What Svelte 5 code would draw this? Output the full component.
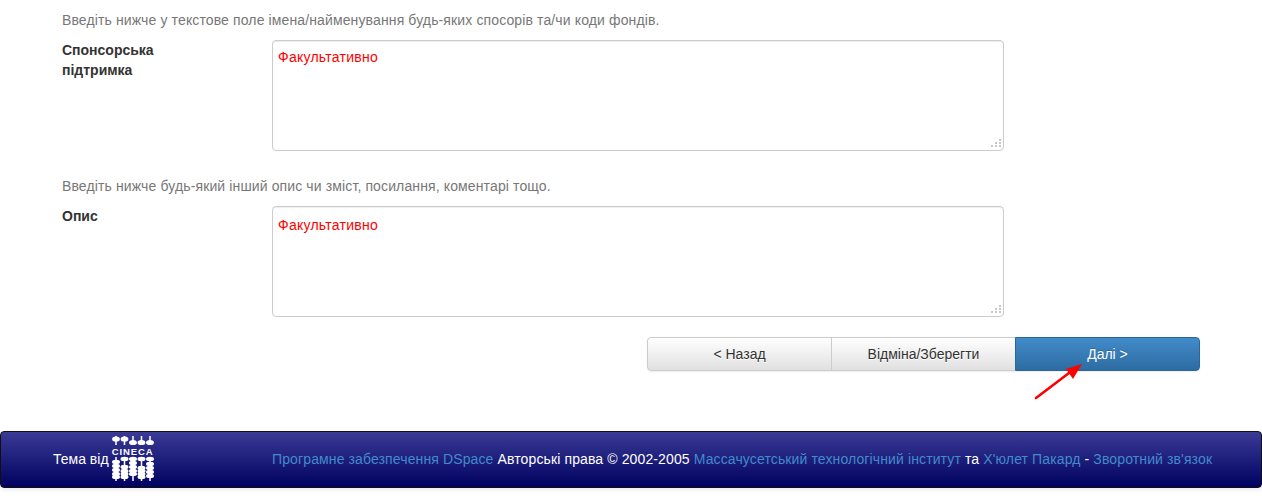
<script lang="ts">
  const fields = [
    {
      hint: 'Введіть нижче у текстове поле імена/найменування будь-яких спосорів та/чи коди фондів.',
      label: 'Спонсорська підтримка',
      name: 'sponsors',
      low: false
    },
    {
      hint: 'Введіть нижче будь-який інший опис чи зміст, посилання, коментарі тощо.',
      label: 'Опис',
      name: 'description',
      low: true
    }
  ];

  // CINECA abacus logo: five rods, beads listed by y
  const rods = [
    { x: 4, top: 3, stem: [0, 9], low: [26, 30, 34, 38, 41] },
    { x: 12.5, top: 3, stem: [0, 9], low: [23, 31, 35, 38, 41] },
    { x: 21, top: 6.5, stem: [0, 7], low: [23, 27, 31, 35, 38] },
    { x: 29.5, top: 6.5, stem: [0, 7], low: [23, 32, 35, 38, 41] },
    { x: 38, top: 6.5, stem: [0, 7], low: [23, 28, 32, 36, 40] }
  ];
</script>

<div class="page">
  <main class="container">
    {#each fields as f (f.name)}
      <p class="hint">{f.hint}</p>
      <div class="field">
        <label class="field-label" for={f.name}>{f.label}</label>
        <div class="input-wrap">
          <textarea id={f.name} class="field-input" class:low={f.low} rows="5" value="Факультативно"></textarea>
          <svg class="grip" width="11" height="9" viewBox="0 0 11 9" aria-hidden="true">
            <g fill="#c8c8c8">
              <rect x="8" y="0" width="2" height="2" />
              <rect x="4" y="3" width="2" height="2" />
              <rect x="8" y="3" width="2" height="2" />
              <rect x="0" y="6" width="2" height="2" />
              <rect x="4" y="6" width="2" height="2" />
              <rect x="8" y="6" width="2" height="2" />
            </g>
          </svg>
        </div>
      </div>
    {/each}

    <div class="actions">
      <button class="btn">&lt; Назад</button>
      <button class="btn">Відміна/Зберегти</button>
      <button class="btn btn-primary">Далі &gt;</button>
    </div>
  </main>

  <svg class="arrow" width="56" height="44" viewBox="0 0 56 44" aria-hidden="true">
    <path d="M3 40 L36 15" stroke="#f00" stroke-width="2.6" stroke-linecap="round" />
    <path d="M49 6 L33 11 L40 21 Z" fill="#f00" />
  </svg>

  <footer class="footer">
    <div class="theme">
      <span>Тема від</span>
      <div class="logo">
        <svg width="42" height="46" viewBox="0 0 42 46" aria-hidden="true">
          <g fill="#fff" stroke="#fff">
            {#each rods as r (r.x)}
              <line x1={r.x} y1={r.stem[0]} x2={r.x} y2={r.stem[1]} stroke-width="1.5" />
              <ellipse cx={r.x} cy={r.top} rx="3.9" ry="2.6" stroke="none" />
              <line x1={r.x} y1="21" x2={r.x} y2="45" stroke-width="1.5" />
              {#each r.low as cy (cy)}
                <ellipse cx={r.x} cy={cy} rx="4" ry="2.2" stroke="none" />
              {/each}
            {/each}
          </g>
        </svg>
        <span class="logo-text">CINECA</span>
      </div>
    </div>
    <div class="credits">
      <a href="#dspace">Програмне забезпечення DSpace</a> Авторські права © 2002-2005
      <a href="#mit">Массачусетський технологічний інститут</a> та
      <a href="#hp">Х'юлет Пакард</a> -
      <a href="#feedback">Зворотний зв'язок</a>
    </div>
  </footer>
</div>

<style>
  :global(body) {
    font-family: "Liberation Sans", Arial, sans-serif;
    font-size: 14px;
    line-height: 20px;
    color: #333;
    background: #fff;
  }

  .page {
    position: relative;
    height: 504px;
    overflow: hidden;
  }

  .container {
    width: 1170px;
    margin: 0 auto;
    padding: 10px 16px 0 16px;
    box-sizing: border-box;
  }

  .hint {
    margin: 0 0 10px;
    color: #777;
    letter-spacing: 0.125px;
  }

  .field {
    display: flex;
    align-items: flex-start;
    margin-bottom: 25px;
  }

  .field-label {
    width: 210px;
    flex: none;
    padding: 0 120px 0 0;
    box-sizing: border-box;
    font-weight: 700;
    line-height: 20px;
  }

  .input-wrap {
    position: relative;
    width: 732px;
    height: 111px;
  }

  .field-input {
    display: block;
    width: 100%;
    height: 100%;
    padding: 6px 5px;
    box-sizing: border-box;
    border: 1px solid #ccc;
    border-radius: 4px;
    box-shadow: inset 0 1px 1px rgba(0, 0, 0, 0.075);
    color: #f00;
    background: #fff;
    font-family: "Liberation Sans", Arial, sans-serif;
    font-size: 14px;
    line-height: 20px;
    letter-spacing: 0.25px;
    outline: none;
    resize: none;
  }

  .field-input.low {
    padding-top: 8px;
  }

  .grip {
    position: absolute;
    right: 2px;
    bottom: 3px;
  }

  .actions {
    display: grid;
    grid-template-columns: 185px 184px 184px;
    width: 553px;
    height: 34px;
    margin: -5px 0 0 585px;
    border-radius: 4px;
    box-shadow: 0 1px 2px rgba(0, 0, 0, 0.08);
  }

  .btn {
    padding: 0;
    border: 1px solid #ccc;
    background: linear-gradient(to bottom, #fff 0, #e0e0e0 100%);
    color: #333;
    font: inherit;
    text-shadow: 0 1px 0 #fff;
  }

  .btn:first-child {
    border-radius: 4px 0 0 4px;
  }

  .btn + .btn {
    margin-left: -1px;
  }

  .btn-primary {
    border-color: #2b669a;
    border-radius: 0 4px 4px 0;
    background: linear-gradient(to bottom, #428bca 0, #2d6ca2 100%);
    color: #fff;
    text-shadow: 0 -1px 0 rgba(0, 0, 0, 0.2);
  }

  .arrow {
    position: absolute;
    left: 1033px;
    top: 358px;
  }

  .footer {
    position: absolute;
    left: 0;
    right: 0;
    top: 431px;
    display: flex;
    align-items: center;
    height: 57px;
    box-sizing: border-box;
    padding-bottom: 1px;
    border: 1px solid #101010;
    border-radius: 4px;
    background: linear-gradient(to bottom, #3b3b96 0, #000060 100%);
    box-shadow: 0 2px 4px rgba(0, 0, 0, 0.08);
    color: #fff;
  }

  .theme {
    display: flex;
    align-items: center;
    gap: 3px;
    width: 271px;
    padding-left: 52px;
    box-sizing: border-box;
    flex: none;
  }

  .logo {
    position: relative;
    width: 42px;
    height: 46px;
  }

  .logo svg {
    display: block;
  }

  .logo-text {
    position: absolute;
    left: 0;
    right: 0;
    top: 11px;
    color: #fff;
    font-size: 9.5px;
    font-weight: 700;
    line-height: 10px;
    letter-spacing: 0.9px;
    text-align: center;
    white-space: nowrap;
  }

  .credits {
    white-space: nowrap;
    letter-spacing: 0.12px;
  }

  .credits a {
    color: #428bca;
    text-decoration: none;
  }
</style>
